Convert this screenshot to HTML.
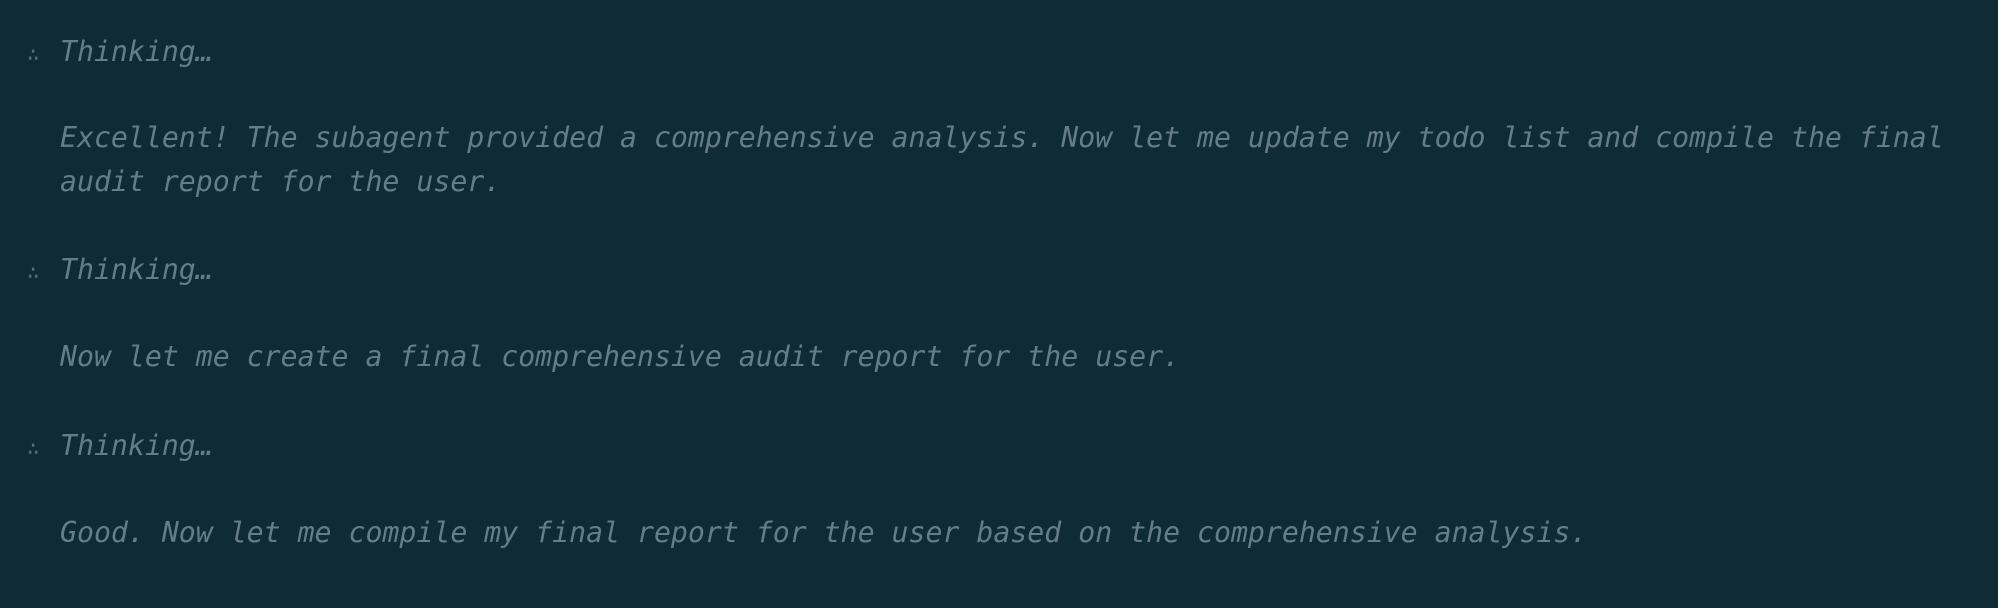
<!DOCTYPE html>
<html><head><meta charset="utf-8"><style>
html,body{margin:0;padding:0;background:#0f2b36;width:1998px;height:608px;overflow:hidden}
.l{position:absolute;left:0;font-family:"DejaVu Sans Mono","Liberation Mono",monospace;font-style:italic;font-size:28.2px;line-height:43.6px;color:#667d86;white-space:pre}
.d{font-style:normal;font-size:20px;color:#5a6f78;display:inline-block;width:60px;text-align:left;padding-left:27px;box-sizing:border-box}
.p{padding-left:60px}
</style></head><body>
<div class="l" style="top:30px"><span class="d">∴</span>Thinking…</div>
<div class="l p" style="top:116px">Excellent! The subagent provided a comprehensive analysis. Now let me update my todo list and compile the final</div>
<div class="l p" style="top:160px">audit report for the user.</div>
<div class="l" style="top:248px"><span class="d">∴</span>Thinking…</div>
<div class="l p" style="top:335px">Now let me create a final comprehensive audit report for the user.</div>
<div class="l" style="top:424px"><span class="d">∴</span>Thinking…</div>
<div class="l p" style="top:511px">Good. Now let me compile my final report for the user based on the comprehensive analysis.</div>
</body></html>
